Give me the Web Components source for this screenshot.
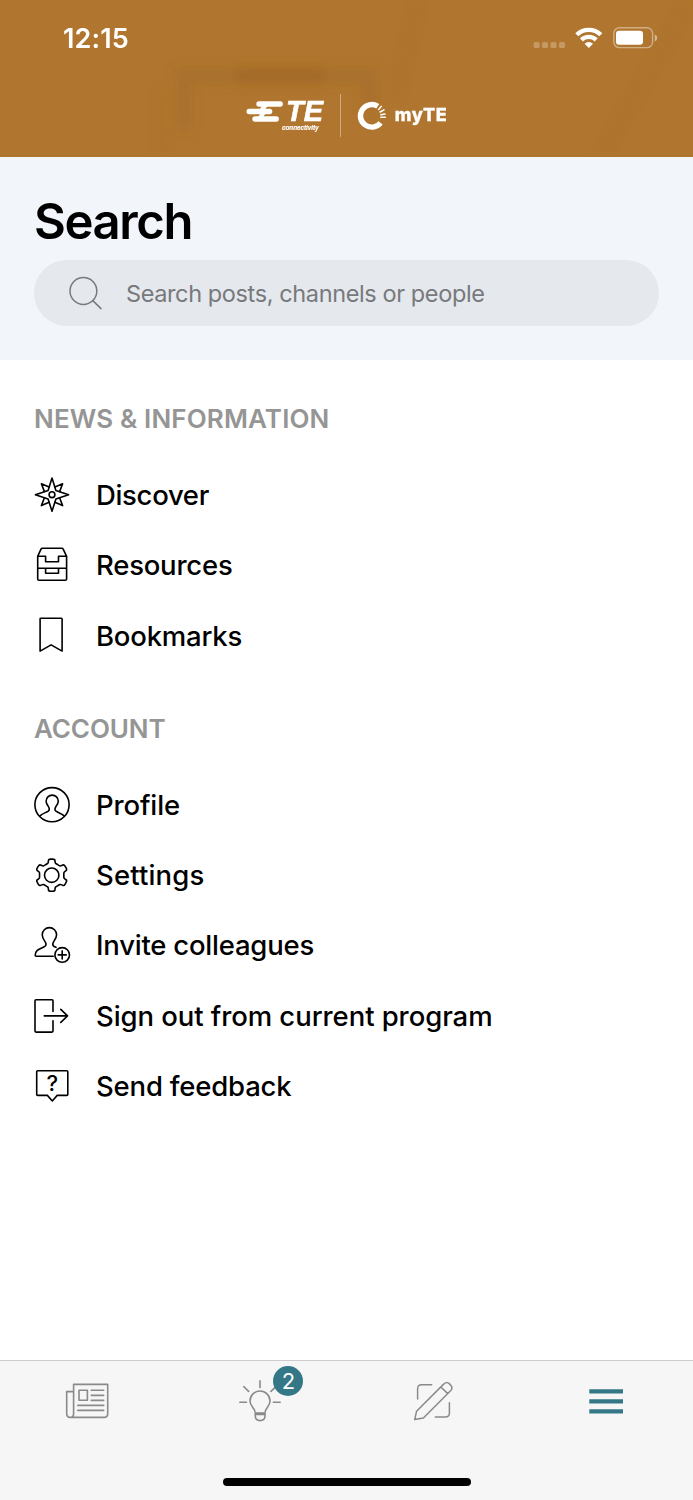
<!DOCTYPE html>
<html lang="en">
<head>
<meta charset="utf-8">
<title>myTE</title>
<style>
body{margin:0;background:#fff;font-family:Inter,"Liberation Sans",sans-serif;color:#000}
</style>
</head>
<body>
<app-screen></app-screen>
<script>
const define = (name, html, setup) => customElements.define(name, class extends HTMLElement {
  constructor(){ super(); this.attachShadow({mode:'open'}); }
  connectedCallback(){
    this.shadowRoot.innerHTML = typeof html === 'function' ? html(this) : html;
    if (setup) setup(this);
  }
});

/* One line of text tracked so that its advance equals the "w" attribute. */
define('fit-text', '<style>:host{display:inline-block;white-space:nowrap;line-height:1}</style><slot></slot>', el => {
  const n = el.textContent.length;
  const r = document.createRange();
  r.selectNodeContents(el);
  const w = r.getBoundingClientRect().width;
  el.style.letterSpacing = ((+el.getAttribute('w') - w) / n).toFixed(4) + 'px';
});

const gear = (() => {
  const p = (a, r) => { const t = (a - 90) * Math.PI / 180; return [19.7 + r*Math.cos(t), 20.2 + r*Math.sin(t)]; };
  const pts = [];
  for (let k = 0; k < 6; k++) for (const [a, r] of [[-24,12.2],[-16,12.6],[-11,16.4],[11,16.4],[16,12.6],[24,12.2]]) pts.push(p(k*60 + a, r));
  const mid = (a, b, t) => [a[0]+(b[0]-a[0])*t, a[1]+(b[1]-a[1])*t];
  const f = q => q.map(v => v.toFixed(2)).join(' ');
  let d = '';
  pts.forEach((q, i) => {
    const a = pts[(i + pts.length - 1) % pts.length], b = pts[(i + 1) % pts.length];
    d += (i ? 'L' : 'M') + f(mid(q, a, .35)) + 'Q' + f(q) + ' ' + f(mid(q, b, .35));
  });
  return d + 'Z';
})();

const icons = {
  discover: [40, '<g transform="translate(20 19.7)"><path d="M0-16.6 3.9-4.2 16.6 0 3.9 4.2 0 16.6-3.9 4.2-16.6 0-3.9-4.2Z"/><path d="M-2.9-7.6-10.6-10.9-7.6-3.1M2.9-7.6 10.6-10.9 7.6-3.1M-2.9 7.6-10.6 10.9-7.6 3.1M2.9 7.6 10.6 10.9 7.6 3.1"/><circle r="2.9"/></g>'],
  resources: [40, '<path d="M5.7 11.3 9 4.2Q9.4 3.3 10.4 3.3H29.8Q30.8 3.3 31.2 4.2L34.6 11.3V34Q34.6 35.3 33.3 35.3H7Q5.7 35.3 5.7 34ZM5.7 11.3H13.6V16.7H26.5V11.3H34.6M5.7 23.3H34.6M13.6 23.3V28.2H26.5V23.3"/>'],
  bookmark: [40, '<path d="M8.1 3.2Q8.1 2.7 8.9 2.7H29.3Q30.1 2.7 30.1 3.5V35.6L19.1 29.4 8.1 35.6Z" transform="translate(0 -.5)"/>'],
  profile: [40, '<circle cx="20" cy="19.7" r="17.1"/><path d="M8.3 30.6C10.2 28.6 14.3 27.5 16.3 26.2 17.9 25 17.3 23 16.2 21.2 14.6 19 14.1 17.8 14.1 16.2A6.1 6.1 0 0 1 26.3 16.2C26.3 17.8 25.7 19 24.1 21.2 22.9 23 22.4 25 24 26.2 26 27.5 30 28.7 31.8 30.6"/>'],
  gear: [40, '<path d="' + gear + '"/><circle cx="19.7" cy="20.2" r="7.2"/>'],
  invite: [40, '<path d="M21.3 31.3H4.2Q3.2 31.3 3.2 30.3C3.2 24 8.8 24.1 12.8 21.4 14.3 20.3 13.9 17.9 12.9 16.4 11.3 14.1 10.2 12.4 10.2 9.8A7.2 7.2 0 0 1 24.6 9.8C24.6 12.4 23.4 14.2 21.9 16.4 20.8 18 20.5 20.3 22 21.4L24 22.3"/><circle cx="30.2" cy="29.9" r="7.3"/><path d="M26.2 29.9H34.2M30.2 25.9V33.9"/>'],
  signout: [40, '<path d="M21 16V5.3Q21 4.3 20 4.3H4Q3 4.3 3 5.3V35.6Q3 36.6 4 36.6H20Q21 36.6 21 35.6V25.3M12.3 20.4H35.4M28.8 13.9 35.5 20.4 28.8 26.9" transform="translate(0 -.5)"/>'],
  feedback: [40, '<g transform="translate(0 -.6)"><path d="M5.7 5.3H34.8Q35.8 5.3 35.8 6.3V29Q35.8 30 34.8 30H25.2L20.3 35.6 15.4 30H5.7Q4.7 30 4.7 29V6.3Q4.7 5.3 5.7 5.3Z"/><text x="20.2" y="25.7" text-anchor="middle" font-size="22" font-weight="500" font-family="Inter,sans-serif" fill="currentColor" stroke="none">?</text></g>'],
  search: [40, '<circle cx="17.4" cy="18" r="13.4"/><path d="M26.8 27.6 35 35.6"/>'],
  news: [48, '<path d="M10.6 7.4H44.7V36.8Q44.7 40.4 41 40.4H7.4Q3.7 40.4 3.7 36.8V14.6H10.6M10.6 7.4V36.8Q10.6 40.4 7.4 40.4M16 13.3H24.4V23.3H16ZM28.3 13.3H40.7M28.3 18.4H40.7M28.3 23.4H40.7M14.8 28.4H40.7M14.8 33.4H40.7"/>'],
  bulb: [48, '<path d="M24 3.8V10.6M3.8 25.3H10.5M37.4 25.3H44.2M7.7 9.5 12.6 14.4M35 14.4 39.8 9.6M19.3 36C19.3 31 14 30 14 24A10 10 0 0 1 34 24C34 30 29 31 29 36ZM19.3 36V39Q19.3 43.6 24.1 43.6T29 39V36M19.3 37.4H29"/>'],
  pencil: [48, '<path d="M8.6 22V11.7Q8.6 7.7 12.6 7.7H22.7M40.4 25.7V36Q40.4 40 36.4 40H26.3M5.7 42.6 7.6 34.2 34.4 7.4Q37.5 4 40.7 7.1L41.8 8.2Q44.3 11.4 41.3 14L14.4 41ZM31.8 10 38.8 16.6"/>'],
  menu: [48, '<g fill="currentColor" stroke="none"><path d="M7.3 12.2H41V16.6H7.3ZM7.3 22.2H41V26.6H7.3ZM7.3 32.2H41V36.6H7.3Z"/></g>']
};
define('line-icon', el => {
  const [s, body] = icons[el.getAttribute('name')];
  return `<style>:host{display:block;width:${s}px;height:${s}px;flex:none}svg{display:block}</style>
  <svg width="${s}" height="${s}" viewBox="0 0 ${s} ${s}" fill="none" stroke="currentColor" stroke-width="${el.getAttribute('stroke') || 1.6}" stroke-linejoin="round" stroke-linecap="round">${body}</svg>`;
});

define('status-bar', `<style>
:host{display:flex;align-items:center;justify-content:space-between;height:76px;padding:0 35px 0 63px;color:#fff}
fit-text{font-size:27px;font-weight:600}
svg{display:block}
</style>
<fit-text w="66">12:15</fit-text>
<svg width="126" height="30" viewBox="532 23 126 30" fill="#fff">
<g opacity=".26"><rect x="533.6" y="42" width="6" height="6" rx="1.6"/><rect x="542" y="42" width="6" height="6" rx="1.6"/><rect x="550.5" y="42" width="6" height="6" rx="1.6"/><rect x="559" y="42" width="6" height="6" rx="1.6"/></g>
<g fill="none" stroke="#fff" stroke-width="4.3"><path d="M576.8 34.8A17.3 17.3 0 0 1 600.8 34.8"/><path d="M581.4 39.9A10.6 10.6 0 0 1 596.2 39.9"/></g>
<path d="M588.8 48 584.6 43.7A6 6 0 0 1 593 43.7Z"/>
<rect x="613.8" y="27.8" width="38.8" height="19.8" rx="5.6" fill="none" stroke="#fff" stroke-opacity=".42" stroke-width="1.4"/>
<rect x="616" y="30.8" width="27" height="14" rx="3"/>
<path d="M654.8 34.4Q657.2 35.3 657.2 38T654.8 41.6Z" opacity=".5"/>
</svg>`);

define('brand-logos', `<style>
:host{display:flex;height:45px;margin-top:17px;padding-left:246px;color:#fff}
.te{width:78px;position:relative}
.te svg{display:block}
.name{position:absolute;left:40px;top:6.7px;font:italic 700 29px/23px "Liberation Sans",sans-serif;-webkit-text-stroke:.6px #fff}
.sub{position:absolute;left:36px;top:31px;font:italic 700 6.4px/7px "Liberation Sans",sans-serif;-webkit-text-stroke:.15px #fff}
.rule{width:1.3px;height:43px;margin:1px 16px 0 15.5px;background:#fff;opacity:.4}
.my{display:flex;gap:9px}
.my svg{display:block}
.my fit-text{display:block;font-size:18px;font-weight:800;margin-top:12.6px;-webkit-text-stroke:.3px #fff}
</style>
<div class="te"><svg width="42" height="45" viewBox="246 93 42 45" fill="#fff">
<rect x="256.3" y="101.2" width="26.6" height="5.5" rx="2.75"/><rect x="246.5" y="108.8" width="25.8" height="5.4" rx="2.7"/><rect x="252.3" y="116.2" width="26.6" height="5.5" rx="2.75"/>
<path d="M262 106H267.5L265 109.5H259.5ZM260.5 113.5H265.5L263.3 117H258Z"/></svg>
<fit-text class="name" w="37">TE</fit-text><fit-text class="sub" w="36.5">connectivity</fit-text></div>
<div class="rule"></div>
<div class="my"><svg width="29" height="45" viewBox="357 93 29 45" fill="none" stroke="#fff"><path d="M377.8 106.3A11.3 11.3 0 1 0 380.6 122.9" stroke-width="5.4"/><path d="M378.6 109.5 381.2 106.4M380.1 112 384 109.8M380.8 114.7 385 114M380.8 117.2H385.3" stroke-width="1.5" stroke-linecap="round"/></svg>
<fit-text w="52.5">myTE</fit-text></div>`);

define('app-header', `<style>
:host{display:block;position:relative;height:157px;overflow:hidden;background:#b0762f}
.shade{position:absolute;left:0;top:0}
.front{position:relative}
</style>
<svg class="shade" width="693" height="157" viewBox="0 0 693 157">
<defs><filter id="b" filterUnits="userSpaceOnUse" x="-30" y="-30" width="753" height="217"><feGaussianBlur stdDeviation="5.5"/></filter></defs>
<g fill="none" stroke="#8f591c" filter="url(#b)"><path d="M184 130V76H370V110" stroke-width="16" opacity=".2"/><path d="M235 75H325" stroke-width="14" opacity=".3"/><path d="M162 160V90" stroke-width="5" opacity=".12"/><path d="M418 0 395 100M690 0 600 157" stroke-width="6" opacity=".09"/></g></svg>
<div class="front"><status-bar></status-bar><brand-logos></brand-logos></div>`);

define('search-panel', `<style>
:host{display:block;box-sizing:border-box;height:203px;padding:40px 34px 0;background:#f2f5fa}
h1{margin:0;height:63px;font-size:49px;font-weight:600;line-height:50px}
.field{display:flex;align-items:center;gap:20px;box-sizing:border-box;height:66px;border-radius:33px;padding-left:32px;background:#e5e8ec;color:#77797c;font-size:23.5px}
.field fit-text{padding-top:1px}
</style>
<h1><fit-text w="158">Search</fit-text></h1>
<div class="field"><line-icon name="search" stroke="1.5"></line-icon><fit-text w="358.5">Search posts, channels or people</fit-text></div>`);

define('menu-section', el => `<style>
:host{display:block}
h2{margin:0;height:57px;padding:1px 0 0 34px;box-sizing:border-box;color:#959595;font-size:26px;font-weight:600;line-height:30px}
</style><h2><fit-text w="${el.getAttribute('w')}">${el.getAttribute('label').replace('&', '&amp;')}</fit-text></h2><slot></slot>`);

define('menu-item', el => `<style>
:host{display:flex;align-items:center;gap:24px;height:70.25px;padding-left:32px;font-size:27.5px;font-weight:500}
fit-text{padding-top:1.4px}
</style><line-icon name="${el.getAttribute('icon')}"></line-icon><fit-text w="${el.getAttribute('w')}">${el.textContent}</fit-text>`);

define('tab-bar', `<style>
:host{display:block;box-sizing:border-box;height:140px;border-top:1px solid #cbcbcb;background:#f6f6f6;color:#8a8a8a}
nav{display:grid;grid-template-columns:repeat(4,1fr);justify-items:center;padding-top:16px;height:101px;box-sizing:border-box}
.tab{position:relative;height:48px}
.on{color:#347887}
.badge{position:absolute;left:37.6px;top:-11px;width:30px;height:30px;border-radius:50%;background:#347887;color:#fff;font-size:22px;line-height:30px;text-align:center}
.home{width:248px;height:8px;margin:16px auto 0;border-radius:4px;background:#000}
</style>
<nav><div class="tab"><line-icon name="news"></line-icon></div>
<div class="tab"><line-icon name="bulb"></line-icon><span class="badge">2</span></div>
<div class="tab"><line-icon name="pencil" stroke="1.5"></line-icon></div>
<div class="tab on"><line-icon name="menu"></line-icon></div></nav>
<div class="home"></div>`);

define('app-screen', `<style>
:host{display:flex;flex-direction:column;height:1500px;overflow:hidden}
main{flex:1;padding-top:43px}
menu-section + menu-section{margin-top:42px}
</style>
<app-header></app-header>
<search-panel></search-panel>
<main>
<menu-section label="NEWS & INFORMATION" w="295.5">
<menu-item icon="discover" w="113">Discover</menu-item>
<menu-item icon="resources" w="136.5">Resources</menu-item>
<menu-item icon="bookmark" w="146">Bookmarks</menu-item>
</menu-section>
<menu-section label="ACCOUNT" w="131.5">
<menu-item icon="profile" w="84">Profile</menu-item>
<menu-item icon="gear" w="108.5">Settings</menu-item>
<menu-item icon="invite" w="218">Invite colleagues</menu-item>
<menu-item icon="signout" w="396.5">Sign out from current program</menu-item>
<menu-item icon="feedback" w="195.5">Send feedback</menu-item>
</menu-section>
</main>
<tab-bar></tab-bar>`);
</script>
</body>
</html>
